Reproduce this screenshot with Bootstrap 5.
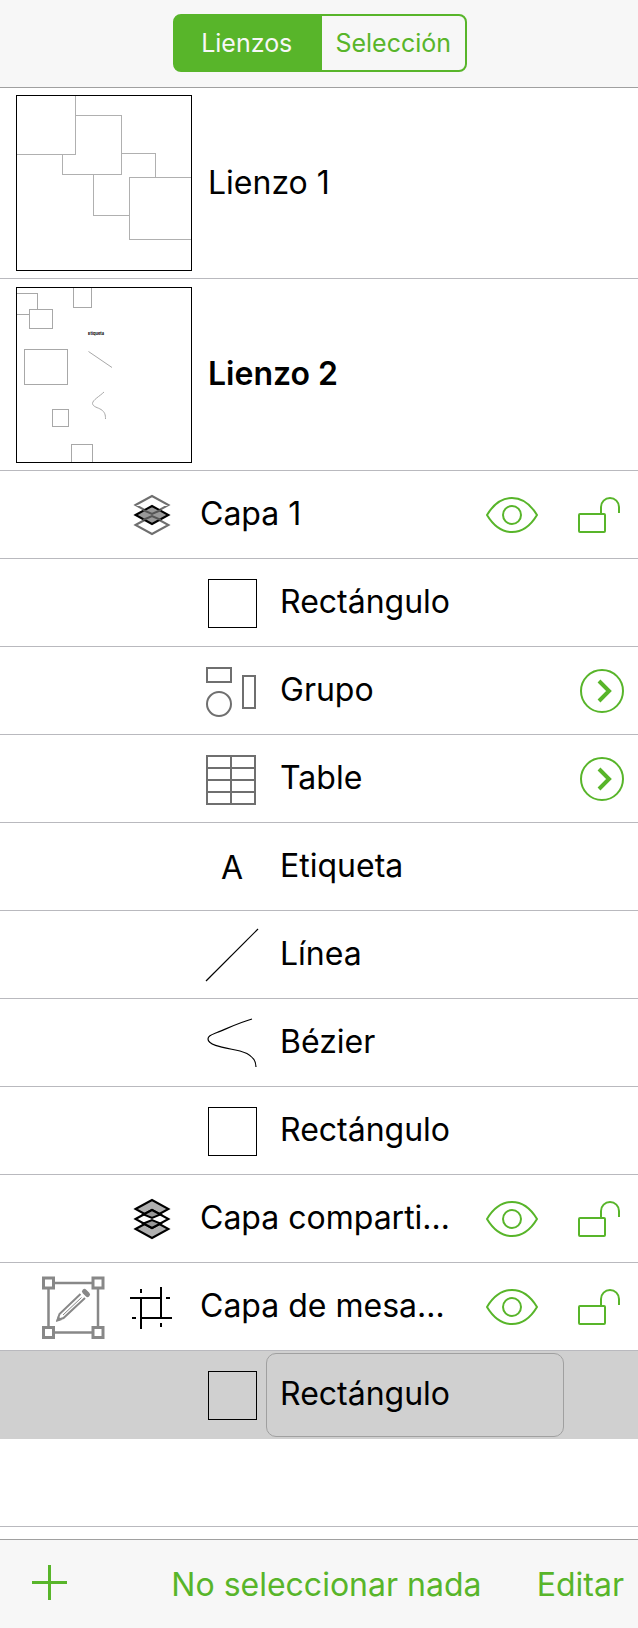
<!DOCTYPE html>
<html lang="es">
<head>
<meta charset="utf-8">
<meta name="viewport" content="width=device-width, initial-scale=1">
<title>Lienzos</title>
<link href="https://cdn.jsdelivr.net/npm/bootstrap@5.3.0/dist/css/bootstrap.min.css" rel="stylesheet">
<style>
  :root { --accent: #58b52a; --line: #b9b9be; --bar: #f7f7f7; --bar-line: #a0a0a0; }
  body { font-family: Inter, "Liberation Sans", sans-serif; font-size: 32px; line-height: 40px; color: #000; background: #fff; }
  svg { display: block; flex: none; fill: none; }
  .top-bar { background: var(--bar); height: 87px; padding: 0 0 2px 2px; }
  .bottom-bar { background: var(--bar); border-top: 1px solid var(--bar-line); height: 89px; padding: 0 14px 0 16px; }
  .switch { width: 294px; }
  .switch .btn { --bs-btn-color: var(--accent); --bs-btn-border-color: var(--accent);
    --bs-btn-hover-color: var(--accent); --bs-btn-hover-border-color: var(--accent);
    --bs-btn-active-bg: var(--accent); --bs-btn-active-border-color: var(--accent); --bs-btn-active-color: #f7f7f7;
    font-size: 25px; line-height: 34px; height: 58px; padding: 10px 0; border-width: 2px; border-radius: 8px; flex: 1 1 0; }
  .item { border-top: 1px solid var(--line); height: 88px; }
  .canvas-item { height: 192px; padding: 0 16px; gap: 16px; }
  .item:first-child { border-top-color: var(--bar-line); height: 191px; }
  .thumb { border: 1px solid #000; width: 176px; height: 176px; }
  .object-item { padding-left: 200px; }
  .name { flex: 1 1 0; min-width: 0; padding-bottom: 1px; }
  .object-item .name { padding-left: 14px; }
  .tool { border: 0; background: none; padding: 0; color: var(--accent); height: 87px; }
  .edge { width: 74px; }
  .chosen { background: #d0d0d0; }
  .chosen + .item { border-top-color: #d0d0d0; }
  .name-field { flex: 1 1 0; min-width: 0; height: 84px; border: 1px solid #a0a0a0; border-radius: 10px; background: none; padding: 0 13px 3px; color: #000; }
  .link-tool { border: 0; background: none; padding: 2px 0 0; color: var(--accent); }
</style>
</head>
<body class="d-flex flex-column min-vh-100">

<svg width="0" height="0" class="position-absolute" aria-hidden="true">
  <symbol id="eye" viewBox="0 0 90 87">
    <g fill="none" stroke="currentColor" stroke-width="2"><path d="M13 44C19 34 27 27 38 27S57 34 63 44C57 54 49 61 38 61S19 54 13 44Z" stroke-linejoin="round"/><circle cx="38" cy="44" r="9"/></g>
  </symbol>
  <symbol id="unlock" viewBox="0 0 74 87">
    <g fill="none" stroke="currentColor" stroke-width="2"><rect x="15" y="43" width="26" height="18" rx="1"/><path d="M37 43V36a9 9 0 0 1 18 0v6"/></g>
  </symbol>
  <symbol id="go" viewBox="0 0 74 87">
    <g fill="none" stroke="currentColor"><circle cx="38" cy="44" r="21" stroke-width="2"/><path d="M35 34l10 10-10 10" stroke-width="4"/></g>
  </symbol>
  <symbol id="square" viewBox="0 0 66 87"><rect x="8.5" y="20.5" width="48" height="48" fill="none" stroke="#000"/></symbol>
</svg>

<header class="top-bar d-flex align-items-center justify-content-center">
  <div class="switch btn-group" role="group" aria-label="Vista">
    <input type="radio" class="btn-check" name="view" id="view-canvas" checked>
    <label class="btn" for="view-canvas">Lienzos</label>
    <input type="radio" class="btn-check" name="view" id="view-selection">
    <label class="btn" for="view-selection">Selección</label>
  </div>
</header>

<main class="flex-grow-1">
<ul class="list-unstyled m-0">
  <li class="item canvas-item d-flex align-items-center">
    <svg class="thumb" viewBox="1 1 174 174" aria-hidden="true">
      <g fill="#fff" stroke="#b0b0b0">
        <rect x="77.5" y="58.5" width="62" height="62"/><rect x="46.5" y="20.5" width="59" height="59"/>
        <rect x="-.5" y="-.5" width="60" height="60"/><rect x="113.5" y="82.5" width="70" height="62"/>
      </g>
    </svg>
    <span class="name text-truncate">Lienzo 1</span>
  </li>
  <li class="item canvas-item d-flex align-items-center">
    <svg class="thumb" viewBox="1 1 174 174" aria-hidden="true">
      <g fill="#fff" stroke="#a8a8a8">
        <rect x="-.5" y="6.5" width="22" height="21"/><rect x="13.5" y="22.5" width="23" height="19"/>
        <rect x="57.5" y="-.5" width="18" height="21"/><rect x="8.5" y="62.5" width="43" height="35"/>
        <rect x="36.5" y="122.5" width="16" height="17"/><rect x="55.5" y="157.5" width="21" height="24"/>
        <path fill="none" d="M72.500 64.500L96 80.500M88 105C84 109 76.500 113 76.500 116.500C77 120 82 120.500 85 122.500C89 125 89.500 128 89.500 132"/>
      </g>
      <text x="72" y="48" font-size="4" font-weight="700" fill="#000">Etiqueta</text>
    </svg>
    <span class="name text-truncate fw-semibold">Lienzo 2</span>
  </li>

  <li class="item d-flex align-items-center">
    <svg width="200" height="87" aria-hidden="true">
      <g stroke="#6f6f6f" stroke-width="2"><path d="M135.500 34L152 25l16.500 9L152 43zM135.500 54L152 45l16.500 9L152 63z"/></g>
      <path d="M135.500 44L152 35l16.500 9L152 53z" fill="#999" stroke="#000" stroke-width="2"/>
      <path d="M143 39l9 4 9-4M143 49l9-4 9 4" stroke="#555" stroke-width="2"/>
    </svg>
    <span class="name text-truncate">Capa 1</span>
    <button class="tool" type="button" aria-label="Visible"><svg width="90" height="87"><use href="#eye"/></svg></button>
    <button class="tool edge" type="button" aria-label="Bloquear"><svg width="74" height="87"><use href="#unlock"/></svg></button>
  </li>
  <li class="item object-item d-flex align-items-center">
    <svg width="66" height="87" aria-hidden="true"><use href="#square"/></svg>
    <span class="name text-truncate">Rectángulo</span><span class="edge"></span>
  </li>
  <li class="item object-item d-flex align-items-center">
    <svg width="66" height="87" stroke="#6f6f6f" stroke-width="2" aria-hidden="true">
      <rect x="7" y="21" width="24" height="14"/><rect x="43" y="29" width="12" height="32"/><circle cx="19" cy="57" r="12"/>
    </svg>
    <span class="name text-truncate">Grupo</span>
    <button class="tool edge" type="button" aria-label="Abrir Grupo"><svg width="74" height="87"><use href="#go"/></svg></button>
  </li>
  <li class="item object-item d-flex align-items-center">
    <svg width="66" height="87" stroke="#6f6f6f" stroke-width="2" aria-hidden="true">
      <rect x="7" y="21" width="48" height="48"/><path d="M31 21v48M7 33h48M7 45h48M7 57h48"/>
    </svg>
    <span class="name text-truncate">Table</span>
    <button class="tool edge" type="button" aria-label="Abrir Table"><svg width="74" height="87"><use href="#go"/></svg></button>
  </li>
  <li class="item object-item d-flex align-items-center">
    <svg width="66" height="87" aria-hidden="true"><text x="32" y="56" text-anchor="middle" font-size="32" fill="#000">A</text></svg>
    <span class="name text-truncate">Etiqueta</span><span class="edge"></span>
  </li>
  <li class="item object-item d-flex align-items-center">
    <svg width="66" height="87" stroke="#000" stroke-width="1.200" aria-hidden="true"><path d="M6 70L58 18"/></svg>
    <span class="name text-truncate">Línea</span><span class="edge"></span>
  </li>
  <li class="item object-item d-flex align-items-center">
    <svg width="66" height="87" stroke="#000" stroke-width="1.200" aria-hidden="true"><path d="M52 20C38 24 26 30 17 33.500C11 36 8 37 8 40C8 47 27 49 40 52C51 55 56 60 56 68"/></svg>
    <span class="name text-truncate">Bézier</span><span class="edge"></span>
  </li>
  <li class="item object-item d-flex align-items-center">
    <svg width="66" height="87" aria-hidden="true"><use href="#square"/></svg>
    <span class="name text-truncate">Rectángulo</span><span class="edge"></span>
  </li>

  <li class="item d-flex align-items-center">
    <svg width="200" height="87" stroke="#000" stroke-width="2" aria-hidden="true">
      <path d="M135.500 34L152 25l16.500 9L152 43zM135.500 54L152 45l16.500 9L152 63z" fill="#b0b0b0"/>
      <path d="M135.500 44L152 35l16.500 9L152 53z" fill="#fff"/>
      <path d="M143.500 39.500L152 35l8.500 4.500L152 43zM143.500 48.500L152 45l8.500 3.500L152 53z" fill="#999"/>
    </svg>
    <span class="name text-truncate">Capa comparti…</span>
    <button class="tool" type="button" aria-label="Visible"><svg width="90" height="87"><use href="#eye"/></svg></button>
    <button class="tool edge" type="button" aria-label="Bloquear"><svg width="74" height="87"><use href="#unlock"/></svg></button>
  </li>
  <li class="item d-flex align-items-center">
    <svg width="200" height="87" aria-hidden="true">
      <g stroke="#888" stroke-width="3">
        <rect x="48.500" y="20" width="49.500" height="49.500" stroke-width="2.500"/>
        <g fill="#fff"><rect x="43.500" y="15" width="10" height="10"/><rect x="93" y="15" width="10" height="10"/><rect x="43.500" y="64.500" width="10" height="10"/><rect x="93" y="64.500" width="10" height="10"/></g>
        <path d="M80.500 31L59.500 51l-2 6 6-2L85 35" stroke-width="2"/>
        <path d="M81.500 34.500L63 52" stroke-width="1"/>
        <path d="M84.500 28.500l3 3" stroke-width="5" stroke-linecap="round"/>
        <path d="M56 59l2-6 4 4z" fill="#888" stroke="none"/>
      </g>
      <path stroke="#000" stroke-width="2" d="M130 35h31M161 24v31M172 55h-31M141 66V35M141 26v4M166 35h4M132 55h4M161 60v4"/>
    </svg>
    <span class="name text-truncate">Capa de mesa…</span>
    <button class="tool" type="button" aria-label="Visible"><svg width="90" height="87"><use href="#eye"/></svg></button>
    <button class="tool edge" type="button" aria-label="Bloquear"><svg width="74" height="87"><use href="#unlock"/></svg></button>
  </li>
  <li class="item object-item chosen d-flex align-items-center">
    <svg width="66" height="87" aria-hidden="true"><use href="#square"/></svg>
    <input class="name-field" type="text" value="Rectángulo" aria-label="Nombre"><span class="edge"></span>
  </li>
  <li class="item"></li>
  <li class="border-top" style="--bs-border-color: var(--line)"></li>
</ul>
</main>

<footer class="bottom-bar d-flex align-items-center justify-content-between">
  <button class="link-tool" type="button" aria-label="Añadir"><svg width="100" height="40" stroke="currentColor" stroke-width="3"><path d="M16 17.500h35M33.500 0v35"/></svg></button>
  <button class="link-tool" type="button">No seleccionar nada</button>
  <button class="link-tool" type="button">Editar</button>
</footer>

<script src="https://cdn.jsdelivr.net/npm/bootstrap@5.3.0/dist/js/bootstrap.bundle.min.js"></script>
</body>
</html>
